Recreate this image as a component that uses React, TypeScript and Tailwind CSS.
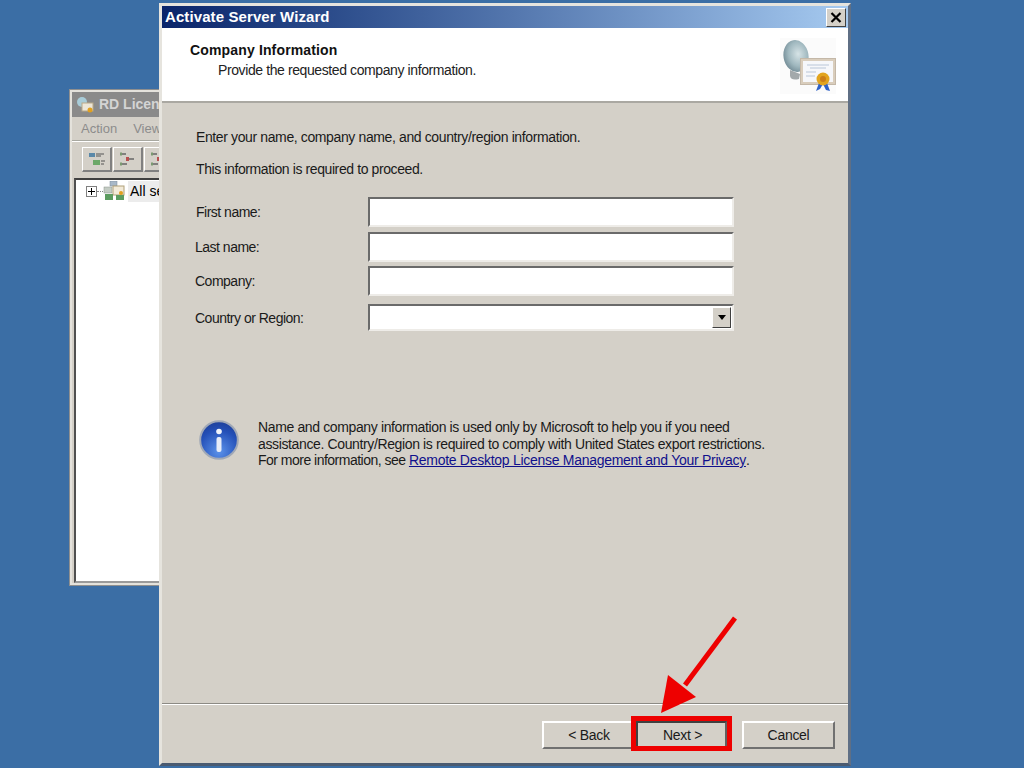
const font = { fontFamily: '"Liberation Sans", Arial, sans-serif' };

function CertIcon() {
  return (
    <svg width="56" height="56" viewBox="0 0 56 56" className="block">
      <defs>
        <radialGradient id="dish" cx="0.6" cy="0.45" r="0.7">
          <stop offset="0" stopColor="#d6e3e6" />
          <stop offset="0.55" stopColor="#a0b8bf" />
          <stop offset="1" stopColor="#667f8a" />
        </radialGradient>
      </defs>
      <rect x="0" y="0" width="56" height="56" fill="#fbfbfb" />
      <ellipse cx="16" cy="18" rx="12.5" ry="16" fill="url(#dish)" transform="rotate(-10 16 18)" />
      <path d="M10 32 L20 36 L19 41 Q11 43 10 38 Z" fill="#a3a9ab" />
      <rect x="20.5" y="20.5" width="35" height="26" fill="#d9cdbc" stroke="#c4b8a8" />
      <rect x="23" y="23" width="30" height="21" fill="#f6f7fa" />
      <path d="M27 27h22M30 30h16M26 34h10M26 38h9" stroke="#b9c6d8" strokeWidth="1" />
      <path d="M39 45 L36 53 L40 51 L43 46 M47 45 L50 53 L46 52 L43 46" fill="#2f62c8" />
      <circle cx="43" cy="41" r="6.5" fill="#e2a41e" />
      <circle cx="43" cy="41" r="3" fill="#cc7e18" />
    </svg>
  );
}

function InfoIcon() {
  return (
    <svg width="40" height="40" viewBox="0 0 40 40" className="block shrink-0 mt-[1px]">
      <defs>
        <radialGradient id="info" cx="0.5" cy="0.8" r="0.85">
          <stop offset="0" stopColor="#5b92ea" />
          <stop offset="0.65" stopColor="#2450b8" />
          <stop offset="1" stopColor="#1c3c94" />
        </radialGradient>
      </defs>
      <circle cx="20" cy="20" r="18.8" fill="url(#info)" stroke="#a0a8b6" strokeWidth="2" />
      <circle cx="20" cy="11.5" r="2.8" fill="#f0f4fb" />
      <rect x="17.5" y="17" width="5" height="15" rx="2" fill="#e6ecf8" />
    </svg>
  );
}

function TreeIcon() {
  return (
    <svg width="22" height="20" viewBox="0 0 22 20" className="block shrink-0">
      <rect x="7" y="0" width="7" height="5" fill="#a8b8c8" stroke="#788898" strokeWidth="0.5" />
      <rect x="1" y="6" width="8" height="6" fill="#c4ccc4" stroke="#8a948a" strokeWidth="0.5" />
      <rect x="10" y="5" width="11" height="9" fill="#f2ead8" stroke="#b0a078" />
      <rect x="2" y="13" width="8" height="6" fill="#5c9c60" />
      <rect x="13" y="14" width="8" height="5" fill="#5c9c60" />
      <circle cx="18" cy="12" r="2" fill="#e0a020" />
    </svg>
  );
}

function ToolGlyph({ variant }: { variant: number }) {
  return (
    <svg width="18" height="14" viewBox="0 0 18 14" className="block">
      {variant === 0 ? (
        <>
          <rect x="1" y="1" width="6" height="4" fill="#5a88a8" />
          <rect x="5" y="8" width="7" height="5" fill="#6ca868" />
          <path d="M8 2h8M8 4h5M13 9h4M13 12h3" stroke="#555" strokeWidth="1" fill="none" />
        </>
      ) : (
        <>
          <path d="M2 2h5M10 7h5M3 12h5" stroke="#666" strokeWidth="1.4" fill="none" />
          <rect x="1" y="0.5" width="2" height="3" fill="#7a9a70" />
          <rect x="7" y="5" width="3" height="4" fill="#b85050" />
          <rect x="1" y="10.5" width="2" height="3" fill="#7a9a70" />
        </>
      )}
    </svg>
  );
}

function BackWindow() {
  return (
    <div className="absolute left-[70px] top-[90px] w-[94px] h-[495px] bg-[#d4d0c8] border-2 border-[#e4e2dc] outline outline-1 outline-[#8f8f8f] flex flex-col overflow-hidden">
      <div className="h-[25px] bg-[#8a8a8a] flex items-center gap-[5px] pl-[4px] shrink-0">
        <svg width="18" height="18" viewBox="0 0 18 18" className="shrink-0">
          <circle cx="6" cy="6" r="5" fill="#a8ccd8" />
          <rect x="6" y="7" width="11" height="8" fill="#ece6d8" stroke="#b8a888" />
          <circle cx="14" cy="14" r="2.5" fill="#e0a020" />
        </svg>
        <span className="text-[14px] font-bold text-[#d4d4d4] whitespace-nowrap">RD Licen</span>
      </div>
      <div className="h-[24px] flex items-center gap-[16px] pl-[9px] text-[13px] text-[#8c8c8c] border-b border-[#a8a8a0] shadow-[0_1px_0_#fff] shrink-0">
        <span>Action</span>
        <span>View</span>
      </div>
      <div className="h-[37px] flex items-center gap-[1px] pl-[10px] shrink-0">
        {[0, 1, 1].map((v, i) => (
          <div key={i} className="w-[30px] h-[25px] shrink-0 flex items-center justify-center border border-t-white border-l-white border-r-2 border-b-2 border-r-[#808080] border-b-[#808080]">
            <ToolGlyph variant={v} />
          </div>
        ))}
      </div>
      <div className="mx-[2px] flex-1 bg-white border-2 border-t-[#404040] border-l-[#505050] border-b-[#9a9a9a] border-r-0 flex items-start pt-[1px] pl-[9px]">
        <div className="flex items-center h-[20px]">
          <div className="w-[11px] h-[11px] border border-[#808080] relative shrink-0 ml-[1px]">
            <div className="absolute left-[1px] right-[1px] top-[4px] h-px bg-black" />
            <div className="absolute top-[1px] bottom-[1px] left-[4px] w-px bg-black" />
          </div>
          <div className="w-[6px] border-t border-dotted border-[#808080]" />
          <TreeIcon />
          <span className="ml-[3px] text-[14px] bg-[#ececec] pl-[2px] pr-[6px] text-black whitespace-nowrap">All se</span>
        </div>
      </div>
    </div>
  );
}

function Field({ label, select, tight, first }: { label: string; select?: boolean; tight?: boolean; first?: boolean }) {
  const spacing = select ? "h-[27px] mt-[8px]" : tight ? "h-[30px] mt-[4px]" : "h-[30px] mt-[5px]";
  return (
    <div className={`flex items-center ${spacing}`}>
      <span className={`w-[172px] text-[14px] tracking-[-0.5px] text-[#1a1a1a] whitespace-nowrap ${first ? "" : "-ml-[1px] mr-[1px]"} ${select ? "pt-[1px]" : ""}`}>{label}</span>
      <div className="w-[366px] h-full bg-white border-2 border-t-[#6a6a6a] border-l-[#6a6a6a] border-r-[#eeece8] border-b-[#eeece8] flex justify-end items-stretch">
        {select && (
          <div className="w-[19px] m-[1px] bg-[#d4d0c8] border-r border-b border-[#404040] border-t border-t-white border-l border-l-white flex items-center justify-center">
            <svg width="10" height="6" viewBox="0 0 10 6"><path d="M1 0h8L5 5z" fill="#000" /></svg>
          </div>
        )}
      </div>
    </div>
  );
}

function Btn({ label, width }: { label: string; width: string }) {
  return (
    <div className={`${width} h-[28px] bg-[#d4d0c8] border-2 border-t-white border-l-white border-r-[#707070] border-b-[#707070] flex items-center justify-center text-[14px] tracking-[-0.3px] text-[#1a1a1a]`}>
      {label}
    </div>
  );
}

function NextBtn() {
  return (
    <div className="relative w-[91px] h-[28px] bg-[#d4d0c8] border-2 border-t-[#404040] border-l-[#404040] border-r-[#606060] border-b-[#606060] flex items-center justify-center pl-[2px] text-[14px] tracking-[-0.3px] text-[#1a1a1a]">
      Next &gt;
      <div className="absolute left-[-7px] top-[-7px] w-[101px] h-[35px] border-[5px] border-[#ee0000]" />
    </div>
  );
}

function Wizard() {
  return (
    <div className="absolute left-[159px] top-[3px] w-[692px] h-[763px] bg-[#d4d0c8] border-[3px] border-t-[#e6e4de] border-l-[#e6e4de] border-r-[#5f6f85] border-b-[#4a5a70] flex flex-col">
      <div className="h-[22px] shrink-0 bg-gradient-to-r from-[#0a246a] to-[#a6caf0] flex items-center justify-between pl-[3px] pr-[2px]">
        <span className="text-[15px] font-bold tracking-[0.1px] text-white whitespace-nowrap">Activate Server Wizard</span>
        <div className="w-[20px] h-[19px] bg-[#d4d0c8] border border-t-white border-l-white border-r-[#404040] border-b-[#404040] flex items-center justify-center">
          <svg width="12" height="11" viewBox="0 0 12 11"><path d="M1.5 1l9 9M10.5 1l-9 9" stroke="#000" strokeWidth="2.2" /></svg>
        </div>
      </div>
      <div className="h-[75px] shrink-0 bg-white border-b-2 border-[#aaa8a2] flex justify-between pl-[28px] pr-[12px]">
        <div className="pt-[14px]">
          <div className="text-[14px] font-bold tracking-[0.15px] leading-[16px] text-[#111]">Company Information</div>
          <div className="mt-[3px] pl-[28px] text-[14px] tracking-[-0.4px] leading-[18px] text-[#222]">Provide the requested company information.</div>
        </div>
        <div className="pt-[10px]"><CertIcon /></div>
      </div>
      <div className="flex-1 flex flex-col pl-[34px] pt-[26px] min-h-0">
        <p className="text-[14px] tracking-[-0.38px] leading-[17px] text-[#1a1a1a]">Enter your name, company name, and country/region information.</p>
        <p className="mt-[15px] text-[14px] tracking-[-0.4px] leading-[17px] text-[#1a1a1a]">This information is required to proceed.</p>
        <div className="mt-[14px]">
          <Field label="First name:" first />
          <Field label="Last name:" />
          <Field label="Company:" tight />
          <Field label="Country or Region:" select />
        </div>
        <div className="mt-[88px] flex items-start gap-[19px] pl-[3px]">
          <InfoIcon />
          <p className="text-[14px] tracking-[-0.37px] leading-[16.5px] text-[#1a1a1a] whitespace-nowrap">
            Name and company information is used only by Microsoft to help you if you need<br />
            assistance. Country/Region is required to comply with United States export restrictions.<br />
            <span className="tracking-[-0.51px]">For more information, see </span><span className="underline tracking-[-0.28px] text-[#10108c]">Remote Desktop License Management and Your Privacy</span>.
          </p>
        </div>
      </div>
      <div className="h-[60px] shrink-0 border-t border-t-[#8c8a84] shadow-[inset_0_1px_0_#fff] flex items-start justify-end pr-[13px] pt-[17px]">
        <Btn label="< Back" width="w-[94px]" />
        <div className="mr-[15px]"><NextBtn /></div>
        <Btn label="Cancel" width="w-[93px]" />
      </div>
    </div>
  );
}

export default function App() {
  return (
    <div className="relative w-[1024px] h-[768px] overflow-hidden bg-[#3b6ea5]" style={font}>
      <BackWindow />
      <Wizard />
      <svg width="90" height="110" viewBox="0 0 90 110" className="absolute left-[655px] top-[612px]">
        <path d="M80 6 L30 73" stroke="#ee0000" strokeWidth="5" fill="none" />
        <path d="M6 101 L13 63 L41 85 Z" fill="#ee0000" />
      </svg>
    </div>
  );
}
